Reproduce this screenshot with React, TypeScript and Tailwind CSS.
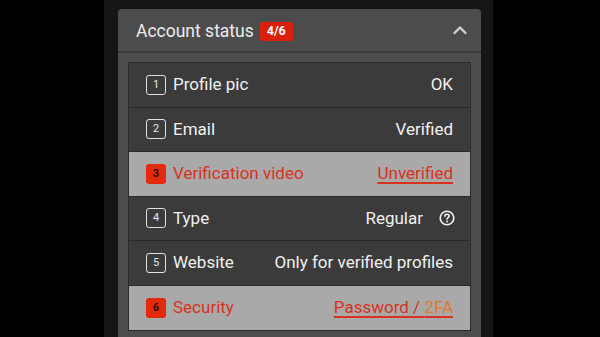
import React from "react";

type Row = {
  n: number;
  label: string;
  value: React.ReactNode;
  warn?: boolean;
  help?: boolean;
};

const rows: Row[] = [
  { n: 1, label: "Profile pic", value: "OK" },
  { n: 2, label: "Email", value: "Verified" },
  {
    n: 3,
    label: "Verification video",
    value: <span className="underline decoration-[1.5px] underline-offset-[3px]">Unverified</span>,
    warn: true,
  },
  { n: 4, label: "Type", value: "Regular", help: true },
  { n: 5, label: "Website", value: "Only for verified profiles" },
  {
    n: 6,
    label: "Security",
    value: (
      <span className="underline decoration-[1.5px] underline-offset-[3px] decoration-[#d8321e]">
        Password / <span className="text-[#e07a2a]">2FA</span>
      </span>
    ),
    warn: true,
  },
];

export default function App() {
  return (
    <div
      className="w-[600px] h-[337px] bg-black flex overflow-hidden"
      style={{ fontFamily: "Roboto, 'Noto Sans', sans-serif" }}
    >
      <div className="ml-[104px] w-[389px] h-full bg-[#161616] pt-[9px] pl-[14px] pr-[12px]">
        <div className="bg-[#4c4c4c] rounded-t-[4px] h-full">
          {/* header */}
          <div className="h-[44px] flex items-center pt-[3px] pl-[18px] pr-[14px] border-b-2 border-[#3a3a3a]">
            <span className="text-[#ececec] text-[17.5px] leading-none">Account status</span>
            <span className="ml-[6px] bg-[#d9200f] text-white text-[12.5px] font-bold leading-none px-[7px] py-[3px] rounded-[2px]">
              4/6
            </span>
            <svg className="ml-auto -mt-[3px]" width="14" height="10" viewBox="0 0 14 10" fill="none">
              <path d="M1.5 8 L7 2.5 L12.5 8" stroke="#cfcfcf" strokeWidth="2.4" strokeLinecap="round" strokeLinejoin="round" />
            </svg>
          </div>

          {/* list */}
          <div className="mx-[10px] mt-[9px] border border-[#2c2c2c]">
            {rows.map((r) => (
              <div
                key={r.n}
                className={`h-[44.5px] flex items-center pl-[17px] pr-[17px] border-b border-[#2a2a2a] last:border-b-0 ${
                  r.warn ? "bg-[#a9a9a9]" : "bg-[#3b3b3b]"
                }`}
              >
                {r.warn ? (
                  <span className="w-[20px] h-[20px] rounded-[3px] bg-[#e42a0c] text-[#2a0a05] text-[11px] font-bold flex items-center justify-center">
                    {r.n}
                  </span>
                ) : (
                  <span className="w-[20px] h-[20px] rounded-[3px] border-[1.5px] border-[#e0e0e0] text-[#e8e8e8] text-[11px] flex items-center justify-center">
                    {r.n}
                  </span>
                )}
                <span
                  className={`ml-[7px] text-[17px] ${r.warn ? "text-[#d8321e]" : "text-[#f0f0f0]"}`}
                >
                  {r.label}
                </span>
                <span
                  className={`ml-auto text-[17px] ${r.warn ? "text-[#d8321e]" : "text-[#f0f0f0]"}`}
                >
                  {r.value}
                </span>
                {r.help && (
                  <svg className="ml-[16px] -mr-[2px]" width="16" height="16" viewBox="0 0 16 16" fill="none">
                    <circle cx="8" cy="8" r="6.8" stroke="#f0f0f0" strokeWidth="1.6" />
                    <path
                      d="M5.9 6.3 C5.9 5 6.9 4.3 8 4.3 C9.2 4.3 10.1 5.1 10.1 6.1 C10.1 7.5 8.1 7.6 8.1 9.1"
                      stroke="#f0f0f0"
                      strokeWidth="1.6"
                      strokeLinecap="round"
                    />
                    <circle cx="8.1" cy="11.5" r="0.95" fill="#f0f0f0" />
                  </svg>
                )}
              </div>
            ))}
          </div>
        </div>
      </div>
    </div>
  );
}
